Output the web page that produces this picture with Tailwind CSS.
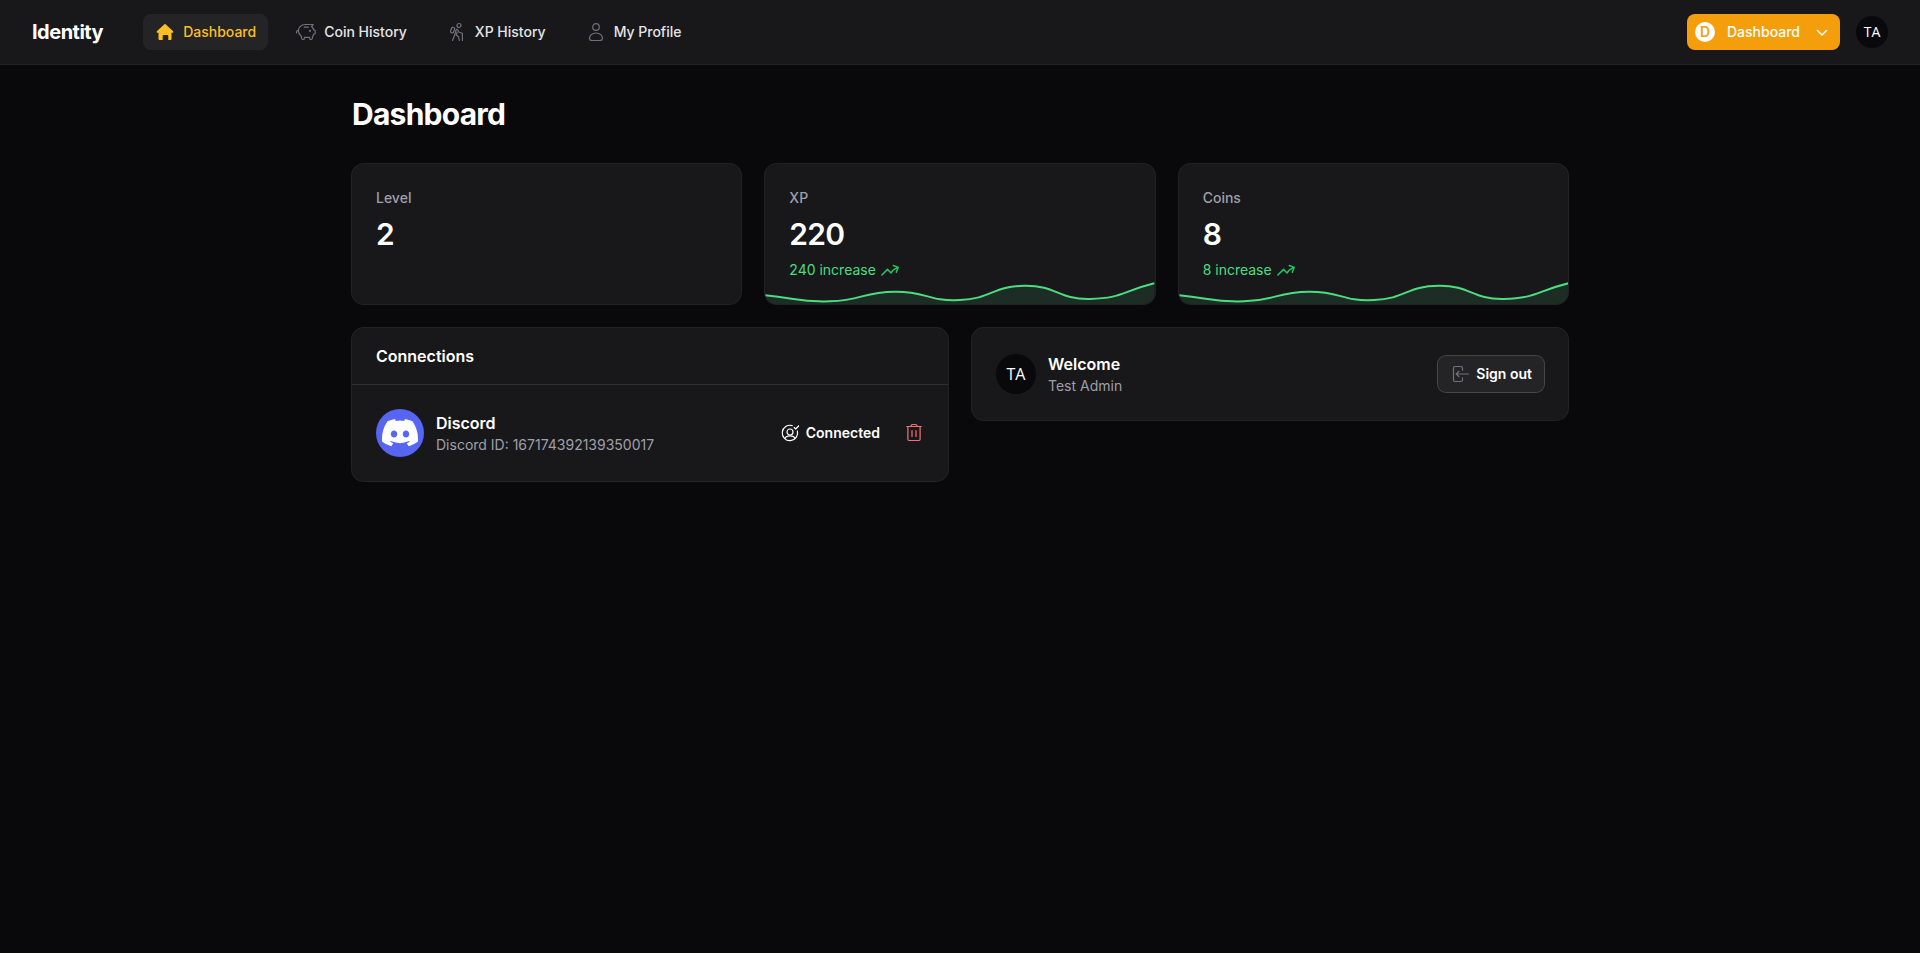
<!DOCTYPE html>
<html lang="en">
    <head>
        <meta charset="UTF-8" />
        <meta name="viewport" content="width=device-width, initial-scale=1.0" />
        <title>Dashboard - Identity</title>
        <script src="https://cdn.jsdelivr.net/npm/@tailwindcss/browser@4"></script>
    </head>

    <body class="min-h-screen bg-zinc-950 font-['Inter',sans-serif] text-sm text-white">
        <!-- Topbar -->
        <header class="flex h-16 items-center bg-zinc-900 px-8 ring-1 ring-white/10">
            <a href="#" class="mr-10 text-xl font-bold tracking-tight">Identity</a>

            <nav class="flex items-center gap-4 font-medium text-zinc-200">
                <a href="#" class="flex items-center gap-2 rounded-lg bg-white/5 px-3 py-2 text-[#fbbf24]">
                    <svg class="size-5" viewBox="0 0 20 20" fill="currentColor">
                        <path d="M10 1.8 18.2 9.3v1.5h-1.7V17a1 1 0 0 1-1 1h-2.2v-3.9a1 1 0 0 0-1-1H8.7a1 1 0 0 0-1 1V18H4.5a1 1 0 0 1-1-1v-6.2H1.8V9.3Z" />
                    </svg>
                    Dashboard
                </a>
                <a href="#" class="flex items-center gap-2 rounded-lg px-3 py-2">
                    <svg class="size-5 text-zinc-500" viewBox="0 0 20 20" fill="none" stroke="currentColor" stroke-width="1.2" stroke-linecap="round" stroke-linejoin="round">
                        <path d="M17.2 2.5H9C5.3 2.5 2.4 5.3 2.4 8.8c0 2.2 1.1 4 2.7 5.2l.8 2.9q.2.6.8.6h.8q.6 0 .7-.6l.3-1.5h5l.3 1.5q.1.6.7.6h.8q.6 0 .8-.6l.8-3 .9-1.9h.6q.8 0 .8-.8V8.8q0-.8-.8-.8h-.6q-.6-1.900-2.2-3.500l1.400-1.600" />
                        <path d="M8.3 5.2h4M2.4 8.300C1.100 8.300.5 9.200.5 10.900" />
                        <circle cx="14" cy="8.800" r=".5" fill="currentColor" />
                    </svg>
                    Coin History
                </a>
                <a href="#" class="flex items-center gap-2 rounded-lg px-3 py-2">
                    <svg class="size-5 text-zinc-500" viewBox="0 0 20 20" fill="none" stroke="currentColor" stroke-width="1.2" stroke-linecap="round" stroke-linejoin="round">
                        <circle cx="12" cy="3.5" r="2" />
                        <rect x="4" y="5.3" width="3.2" height="5.6" rx="1.5" transform="rotate(22 5.6 8.1)" />
                        <path d="M5.5 18.5 7.7 13l1.3-4.900q.6-1.500 1.600-.4l1.500 2.500 3.300 1v7.300M10.100 10l-.9 3 2.300 1.700.8 3.800" />
                    </svg>
                    XP History
                </a>
                <a href="#" class="flex items-center gap-2 rounded-lg px-3 py-2">
                    <svg class="size-5 text-zinc-500" viewBox="0 0 20 20" fill="none" stroke="currentColor" stroke-width="1.2">
                        <circle cx="10" cy="5" r="3.3" />
                        <path d="M10 11c-3.9 0-6.5 2.700-6.500 5.200 0 1.700 1.300 2.300 2.700 2.300h7.600c1.400 0 2.700-.6 2.700-2.300 0-2.500-2.600-5.200-6.500-5.200Z" />
                    </svg>
                    My Profile
                </a>
            </nav>

            <div class="ml-auto flex items-center gap-4">
                <button class="flex items-center gap-3 rounded-lg bg-[#f59e0b] p-2 font-medium">
                    <span class="flex size-5 items-center justify-center rounded-full bg-white text-sm font-semibold text-[#f59e0b]">D</span>
                    Dashboard
                    <svg class="size-5" viewBox="0 0 20 20" fill="none" stroke="currentColor" stroke-width="1.5" stroke-linecap="round" stroke-linejoin="round">
                        <path d="m5.500 8.500 4.500 4.500 4.500-4.500" />
                    </svg>
                </button>
                <button class="size-8 rounded-full bg-zinc-950 font-['Open_Sans',sans-serif]">TA</button>
            </div>
        </header>

        <main class="mx-auto max-w-7xl px-8 py-8">
            <h1 class="mb-8 text-3xl font-bold tracking-tight">Dashboard</h1>

            <!-- Stats -->
            <section class="grid grid-cols-3 gap-6">
                <div class="flex flex-col gap-2 rounded-xl bg-zinc-900 p-6 ring-1 ring-white/10">
                    <p class="font-medium text-zinc-400">Level</p>
                    <p class="text-3xl font-semibold tracking-tight">2</p>
                </div>

                <div class="relative flex flex-col gap-2 overflow-hidden rounded-xl bg-zinc-900 p-6 ring-1 ring-white/10">
                    <p class="font-medium text-zinc-400">XP</p>
                    <p class="text-3xl font-semibold tracking-tight">220</p>
                    <p class="flex items-center gap-1 text-[#4ade80]">
                        240 increase
                        <svg class="size-5 text-[#22c55e]" viewBox="0 0 24 24" fill="none" stroke="currentColor" stroke-width="1.8" stroke-linecap="round" stroke-linejoin="round">
                            <path d="M2.25 18 9 11.25l4.306 4.306a11.95 11.95 0 0 1 5.814-5.518l2.74-1.22m0 0-5.94-2.281m5.94 2.28-2.28 5.941" />
                        </svg>
                    </p>
                    <svg class="absolute inset-x-0 bottom-0 h-6 w-full" viewBox="0 0 389 24" preserveAspectRatio="none">
                        <path class="fill-[#4ade80]/10" d="M0 15.3C32.4 18.3 32.5 22.2 64.9 21.3 97.3 20.4 97.4 12 129.8 11.7 162.2 11.4 162.3 21.6 194.7 20.1 227.1 18.6 227.2 6 259.6 5.7 292 5.4 292.1 19.5 324.5 18.9 356.9 18.3 357 11.1 389 3.3V24H0Z" />
                        <path class="fill-none stroke-[#4ade80] stroke-2" d="M0 15.3C32.4 18.3 32.5 22.2 64.9 21.3 97.3 20.4 97.4 12 129.8 11.7 162.2 11.4 162.3 21.6 194.7 20.1 227.1 18.6 227.2 6 259.6 5.7 292 5.4 292.1 19.5 324.5 18.9 356.9 18.3 357 11.1 389 3.3" />
                    </svg>
                </div>

                <div class="relative flex flex-col gap-2 overflow-hidden rounded-xl bg-zinc-900 p-6 ring-1 ring-white/10">
                    <p class="font-medium text-zinc-400">Coins</p>
                    <p class="text-3xl font-semibold tracking-tight">8</p>
                    <p class="flex items-center gap-1 text-[#4ade80]">
                        8 increase
                        <svg class="size-5 text-[#22c55e]" viewBox="0 0 24 24" fill="none" stroke="currentColor" stroke-width="1.8" stroke-linecap="round" stroke-linejoin="round">
                            <path d="M2.25 18 9 11.25l4.306 4.306a11.95 11.95 0 0 1 5.814-5.518l2.74-1.22m0 0-5.94-2.281m5.94 2.28-2.28 5.941" />
                        </svg>
                    </p>
                    <svg class="absolute inset-x-0 bottom-0 h-6 w-full" viewBox="0 0 389 24" preserveAspectRatio="none">
                        <path class="fill-[#4ade80]/10" d="M0 15.3C32.4 18.3 32.5 22.2 64.9 21.3 97.3 20.4 97.4 12 129.8 11.7 162.2 11.4 162.3 21.6 194.7 20.1 227.1 18.6 227.2 6 259.6 5.7 292 5.4 292.1 19.5 324.5 18.9 356.9 18.3 357 11.1 389 3.3V24H0Z" />
                        <path class="fill-none stroke-[#4ade80] stroke-2" d="M0 15.3C32.4 18.3 32.5 22.2 64.9 21.3 97.3 20.4 97.4 12 129.8 11.7 162.2 11.4 162.3 21.6 194.7 20.1 227.1 18.6 227.2 6 259.6 5.7 292 5.4 292.1 19.5 324.5 18.9 356.9 18.3 357 11.1 389 3.3" />
                    </svg>
                </div>
            </section>

            <div class="mt-6 grid grid-cols-2 items-start gap-6">
                <!-- Connections -->
                <section class="rounded-xl bg-zinc-900 ring-1 ring-white/10">
                    <h2 class="px-6 py-4 text-base font-semibold">Connections</h2>
                    <div class="flex items-center gap-3 border-t border-white/10 p-6">
                        <span class="flex size-12 items-center justify-center rounded-full bg-[#5865f2]">
                            <svg class="w-9" viewBox="0 0 127.14 96.36" fill="currentColor">
                                <path d="M107.7 8.07A105.15 105.15 0 0 0 81.47 0a72.06 72.06 0 0 0-3.36 6.83 97.68 97.68 0 0 0-29.11 0A72.37 72.37 0 0 0 45.64 0a105.89 105.89 0 0 0-26.25 8.09C2.79 32.65-1.71 56.6.54 80.21a105.73 105.73 0 0 0 32.17 16.15 77.7 77.7 0 0 0 6.89-11.11 68.42 68.42 0 0 1-10.85-5.18c.91-.66 1.8-1.34 2.66-2a75.57 75.57 0 0 0 64.32 0c.87.71 1.76 1.39 2.66 2a68.68 68.68 0 0 1-10.87 5.19 77 77 0 0 0 6.89 11.1 105.25 105.25 0 0 0 32.19-16.14c2.64-27.38-4.51-51.11-18.9-72.15ZM42.45 65.69C36.18 65.69 31 60 31 53s5-12.74 11.43-12.74S54 46 53.89 53s-5.05 12.69-11.44 12.69Zm42.24 0C78.41 65.69 73.25 60 73.25 53s5-12.74 11.44-12.74S96.23 46 96.12 53s-5.04 12.69-11.43 12.69Z" />
                            </svg>
                        </span>
                        <div>
                            <h3 class="text-base font-semibold">Discord</h3>
                            <p class="text-zinc-400">Discord ID: 167174392139350017</p>
                        </div>
                        <span class="ml-auto flex items-center gap-1.5 px-3 py-2 font-semibold">
                            <svg class="size-5" viewBox="0 0 20 20" fill="none" stroke="currentColor" stroke-width="1.2" stroke-linecap="round" stroke-linejoin="round">
                                <path d="M12.2 2.600A7.700 7.700 0 1 0 17.400 8M4.900 15.700c1.500-3.700 8.700-3.700 10.200 0" />
                                <circle cx="10" cy="9" r="3" />
                                <path d="m14.200 4.500 1.500 1.500 2.900-3" />
                            </svg>
                            Connected
                        </span>
                        <button aria-label="Delete" class="text-[#f87171]">
                            <svg class="size-5" viewBox="0 0 20 20" fill="none" stroke="currentColor" stroke-width="1.2" stroke-linecap="round" stroke-linejoin="round">
                                <path d="M2.700 3.500h14.600M6.700 3.500q.4-2 1.900-2h2.800q1.500 0 1.900 2M3.900 3.900v12.400q0 1.200 1.200 1.200h9.800q1.200 0 1.200-1.200V3.900M8 7.500v6M12 7.500v6" />
                            </svg>
                        </button>
                    </div>
                </section>

                <!-- Account -->
                <section class="flex items-center gap-3 rounded-xl bg-zinc-900 p-6 ring-1 ring-white/10">
                    <span class="flex size-10 items-center justify-center rounded-full bg-zinc-950 font-['Open_Sans',sans-serif] text-base">TA</span>
                    <div>
                        <h2 class="text-base font-semibold">Welcome</h2>
                        <p class="text-zinc-400">Test Admin</p>
                    </div>
                    <button class="ml-auto flex items-center gap-1.5 rounded-lg bg-white/5 px-3 py-2 font-semibold ring-1 ring-white/20">
                        <svg class="size-5 text-zinc-500" viewBox="0 0 20 20" fill="none" stroke="currentColor" stroke-width="1.2" stroke-linecap="round" stroke-linejoin="round">
                            <path d="M12.500 6.200V4q0-1.500-1.500-1.500H5Q3.500 2.500 3.500 4v12q0 1.500 1.500 1.500h6q1.500 0 1.500-1.500v-2.200M18.500 10H6.200M9 7.300 6.200 10 9 12.700" />
                        </svg>
                        Sign out
                    </button>
                </section>
            </div>
        </main>
    </body>
</html>
